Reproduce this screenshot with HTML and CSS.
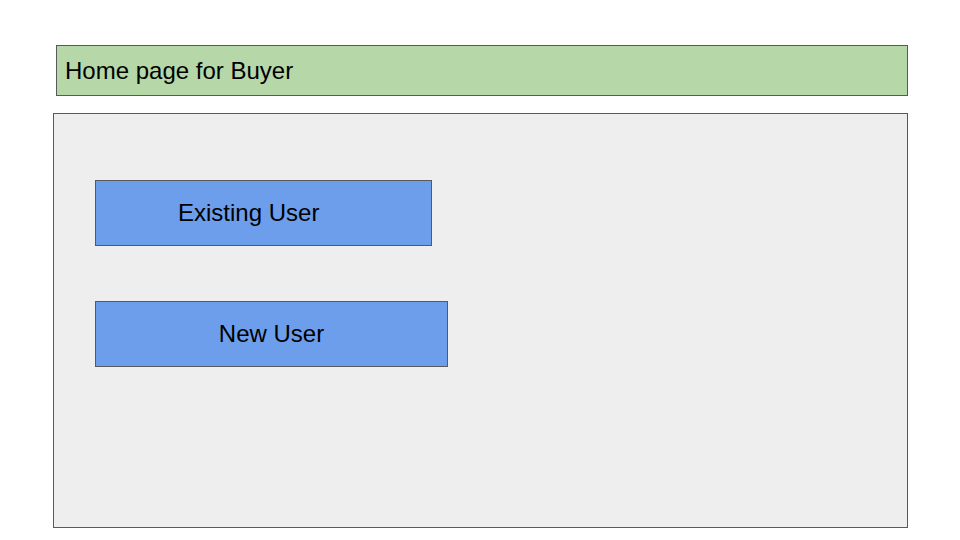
FILE: index.html
```html
<!DOCTYPE html>
<html>
<head>
<meta charset="utf-8">
<link rel="stylesheet" href="styles.css">
</head>
<body>
  <div class="title-bar">Home page for Buyer</div>
  <div class="panel">
    <div class="btn btn-existing">Existing User</div>
    <div class="btn btn-new">New User</div>
  </div>
</body>
</html>
```
FILE: styles.css
```css
html, body {
  margin: 0;
  padding: 0;
  background: #ffffff;
}
body {
  font-family: "Liberation Sans", Arial, sans-serif;
  color: #000000;
  padding-top: 45px;
}
.title-bar {
  box-sizing: border-box;
  margin-left: 56px;
  width: 852px;
  height: 51px;
  background: #b6d7a8;
  border: 1px solid #595959;
  display: flex;
  align-items: center;
  padding-left: 8px;
  font-size: 24px;
}
.panel {
  box-sizing: border-box;
  margin-top: 17px;
  margin-left: 53px;
  width: 855px;
  height: 415px;
  background: #eeeeee;
  border: 1px solid #595959;
  padding: 66px 0 0 41px;
  display: flex;
  flex-direction: column;
  align-items: flex-start;
  gap: 55px;
}
.btn {
  box-sizing: border-box;
  height: 66px;
  background: #6d9eeb;
  border: 1px solid #595959;
  display: flex;
  align-items: center;
  font-size: 24px;
}
.btn-existing {
  width: 337px;
  padding-left: 82px;
}
.btn-new {
  width: 353px;
  justify-content: center;
}
```
